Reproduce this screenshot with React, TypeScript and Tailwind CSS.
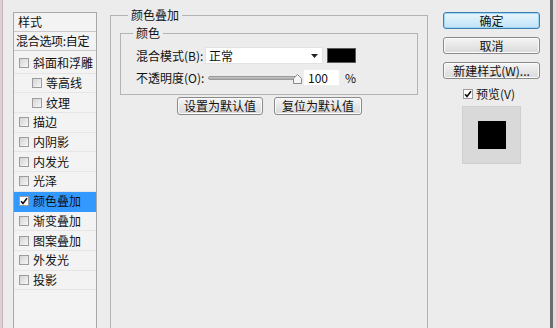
import React from 'react';

type Layer = { name: string; sub?: boolean; active?: boolean };

const layers: Layer[] = [
  { name: '斜面和浮雕' },
  { name: '等高线', sub: true },
  { name: '纹理', sub: true },
  { name: '描边' },
  { name: '内阴影' },
  { name: '内发光' },
  { name: '光泽' },
  { name: '颜色叠加', active: true },
  { name: '渐变叠加' },
  { name: '图案叠加' },
  { name: '外发光' },
  { name: '投影' },
];

const Box = ({ checked = false }: { checked?: boolean }) => (
  <span
    className={`inline-flex h-[10px] w-[10px] shrink-0 items-center justify-center border border-[#9c9c9c] ${
      checked ? 'bg-white' : 'bg-linear-to-br from-[#d4d4d4] to-[#f7f7f7]'
    }`}
  >
    {checked && (
      <svg viewBox="0 0 8 8" className="h-[8px] w-[8px]">
        <path d="M1 4.2 L3 6.4 L7 1.2" fill="none" stroke="#111" strokeWidth="1.6" />
      </svg>
    )}
  </span>
);

const Button = ({ label, primary = false, className = '' }: { label: string; primary?: boolean; className?: string }) => (
  <div
    className={`flex h-[17px] items-center justify-center rounded-[3px] border text-[12px] leading-none text-[#111] ${
      primary
        ? 'border-[#3c7fb1] bg-linear-to-b from-[#eaf6fd] to-[#bfe3f7] shadow-[inset_0_0_0_1px_#9fd6f5]'
        : 'border-[#8a8a8a] bg-linear-to-b from-[#f5f5f5] to-[#d9d9d9] shadow-[inset_0_0_0_1px_#fbfbfb]'
    } ${className}`}
  >
    {label}
  </div>
);

export default function App() {
  return (
    <div className="flex h-[328px] w-[556px] overflow-hidden bg-[#ececec] font-['Noto_Sans_CJK_SC','Liberation_Sans',sans-serif] text-[12px] text-[#111]">
      {/* window edge */}
      <div className="w-[3px] border-r border-[#c4b6bd] bg-[#ddd0d6]" />

      {/* style list */}
      <div className="ml-[10px] mt-[12px] flex w-[84px] flex-col border border-b-0 border-[#a9a9a9] bg-[#f3f3f3]">
        <div className="flex h-[19px] items-center border-b border-[#c9c9c9] pl-[4px] leading-none">样式</div>
        <div className="flex h-[19px] items-center border-b border-[#c9c9c9] pl-[2px] leading-none tracking-[-0.3px]">混合选项:自定</div>
        <div className="h-[3px]" />
        {layers.map((l) => (
          <div
            key={l.name}
            className={`flex h-[19.7px] items-center gap-[4px] border-b leading-none ${
              l.active ? 'border-[#3399ff] bg-[#3399ff]' : 'border-[#e6e6e6]'
            } ${l.sub ? 'pl-[18px]' : 'pl-[5px]'}`}
          >
            <Box checked={l.active} />
            <span>{l.name}</span>
          </div>
        ))}
      </div>

      {/* settings */}
      <div className="ml-[13px] flex w-[318px] flex-col">
        <fieldset className="mt-[8px] flex-1 border border-b-0 border-[#b3b3b3]">
          <legend className="ml-[17px] px-[3px] leading-[14px]">颜色叠加</legend>

          <fieldset className="ml-[9px] mt-[4px] w-[298px] border border-[#b3b3b3] pb-[8px]">
            <legend className="ml-[12px] px-[3px] leading-[14px]">颜色</legend>

            <div className="mt-[7px] flex h-[17px] items-center pl-[15px]">
              <span className="w-[69px] leading-none">混合模式(B):</span>
              <div className="flex h-[17px] w-[118px] items-center justify-between border border-[#e2e2e2] bg-white pl-[3px] pr-[4px] leading-none">
                <span>正常</span>
                <svg viewBox="0 0 7 4" className="h-[4px] w-[7px]">
                  <path d="M0 0 H7 L3.5 4 Z" fill="#222" />
                </svg>
              </div>
              <div className="ml-[4px] h-[15px] w-[29px] border border-[#5a5a5a] bg-black" />
            </div>

            <div className="mt-[5px] flex h-[17px] items-center pl-[15px]">
              <span className="w-[72px] leading-none">不透明度(O):</span>
              <div className="relative h-[17px] w-[94px]">
                <div className="absolute left-0 right-[4px] top-[7px] h-[4px] rounded-[2px] border border-[#9a9a9a] bg-linear-to-b from-[#c8c8c8] to-[#a8a8a8]" />
                <svg viewBox="0 0 9 10" className="absolute right-0 top-[5px] h-[10px] w-[9px]">
                  <path d="M4.5 0.5 L8.5 4.5 V9.5 H0.5 V4.5 Z" fill="#f4f4f4" stroke="#8a8a8a" strokeWidth="1" />
                </svg>
              </div>
              <div className="ml-[1px] flex h-[17px] w-[37px] items-center border border-[#eeeeee] bg-white pl-[4px] leading-none">100</div>
              <span className="ml-[5px] leading-none">%</span>
            </div>
          </fieldset>

          <div className="ml-[66px] mt-[2px] flex gap-[11px]">
            <Button label="设置为默认值" className="h-[18px] w-[86px]" />
            <Button label="复位为默认值" className="h-[18px] w-[88px]" />
          </div>
        </fieldset>
      </div>

      {/* actions */}
      <div className="flex w-[122px] flex-col pl-[15px] pt-[12px]">
        <Button label="确定" primary className="w-[97px]" />
        <Button label="取消" className="mt-[8px] w-[97px]" />
        <Button label="新建样式(W)..." className="mt-[8px] w-[97px]" />
        <div className="mt-[8px] flex h-[14px] items-center gap-[3px] pl-[20px] leading-none">
          <Box checked />
          <span>预览(V)</span>
        </div>
        <div className="ml-[19px] mt-[5px] flex h-[58px] w-[59px] items-center justify-center border border-[#cfcfcf] bg-[#d9d9d9]">
          <div className="h-[28px] w-[28px] bg-black" />
        </div>
      </div>

      {/* right edge */}
      <div className="w-[3px] bg-[#6c6c6c]" />
      <div className="w-[3px] bg-[#dcdcdc]" />
    </div>
  );
}
